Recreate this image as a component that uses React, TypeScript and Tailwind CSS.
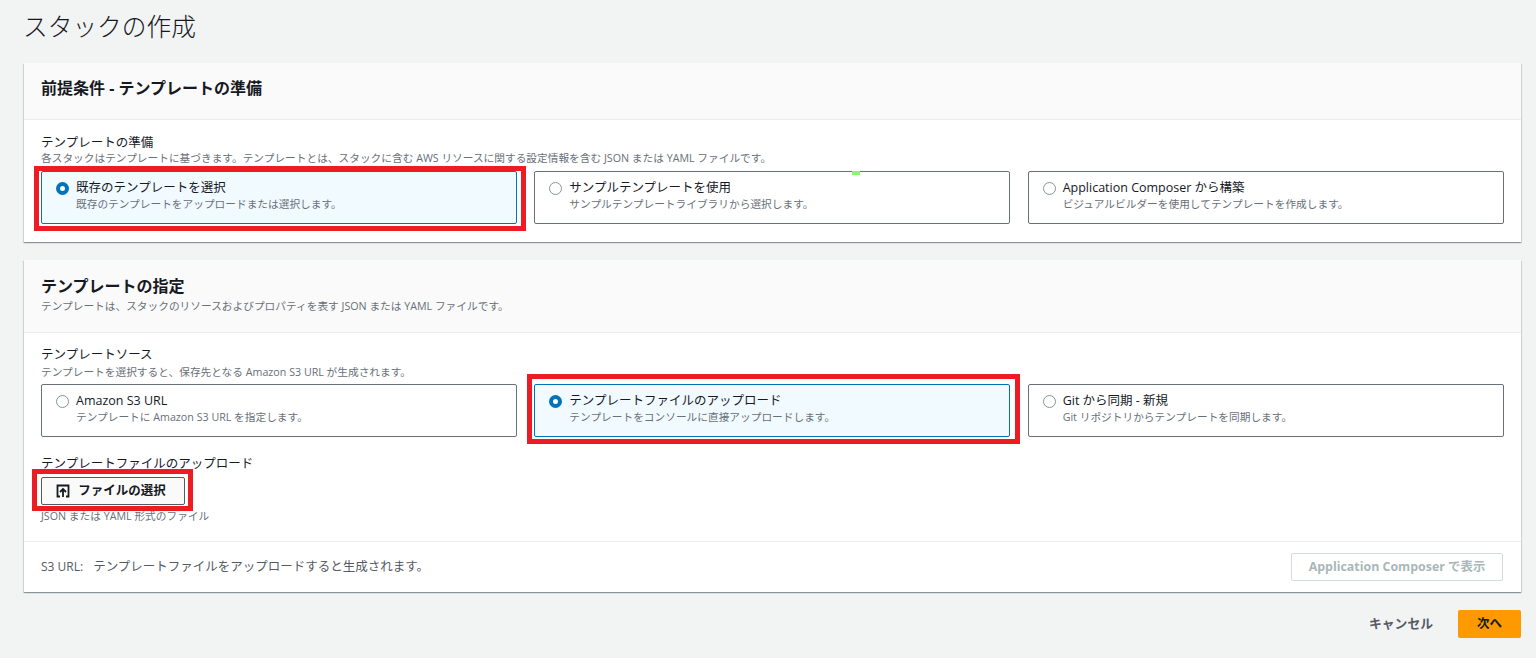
import React from "react";

const Radio = ({ on }: { on?: boolean }) =>
  on ? (
    <span className="mt-[10px] h-[13px] w-[13px] shrink-0 rounded-full border-[4px] border-[#0073bb] bg-white" />
  ) : (
    <span className="mt-[10px] h-[13px] w-[13px] shrink-0 rounded-full border-[1.5px] border-[#879596] bg-white" />
  );

const Tile = ({
  title,
  desc,
  on,
  mark,
  children,
}: {
  title: string;
  desc: string;
  on?: boolean;
  mark?: boolean;
  children?: React.ReactNode;
}) => (
  <div
    className={`relative flex h-[53px] gap-[7px] rounded-[2px] border px-[14px] ${
      on ? "border-[#0073bb] bg-[#f1faff]" : "border-[#687078] bg-white"
    }`}
  >
    <Radio on={on} />
    <div className="pt-[7px]">
      <div className="text-[12.5px] leading-[17px] text-[#16191f]">{title}</div>
      <div className="mt-px text-[10.7px] leading-[14px] text-[#687078]">{desc}</div>
    </div>
    {mark && <span className="absolute left-[317px] -top-px h-[4px] w-[8px] bg-[#8ff07a]" />}
    {children}
  </div>
);

const Red = ({ cls }: { cls: string }) => (
  <span className={`pointer-events-none absolute border-[5px] border-[#ed1c24] ${cls}`} />
);

const cardCls = "bg-white shadow-[0_1px_1px_0_rgba(0,28,36,0.3),1px_1px_1px_0_rgba(0,28,36,0.1),-1px_1px_1px_0_rgba(0,28,36,0.1)]";

export default function App() {
  return (
    <div className="h-[658px] w-[1536px] overflow-hidden bg-[#f2f3f3] pl-[24px] pr-[15px] font-['Open_Sans','Noto_Sans_CJK_JP',sans-serif]">
      <div className="-ml-px h-[63px] pt-[9px] text-[24.7px] font-light leading-[36px] text-[#16191f]">スタックの作成</div>

      <section className={`h-[179px] ${cardCls}`}>
        <div className="flex h-[57px] items-center border-b border-[#eaeded] bg-[#fafafa] pb-[6px] pl-[17px] pr-[18px] text-[16px] font-bold text-[#16191f]">
          前提条件 - テンプレートの準備
        </div>
        <div className="pl-[17px] pr-[17.5px] pt-[15px]">
          <div className="text-[12.5px] leading-[16px] text-[#16191f]">テンプレートの準備</div>
          <div className="mt-px text-[10.7px] leading-[13px] text-[#687078]">
            各スタックはテンプレートに基づきます。テンプレートとは、スタックに含む AWS リソースに関する設定情報を含む JSON または YAML ファイルです。
          </div>
          <div className="mt-[6px] grid grid-cols-3 gap-[17.5px]">
            <Tile on title="既存のテンプレートを選択" desc="既存のテンプレートをアップロードまたは選択します。">
              <Red cls="-left-[8px] -right-[10px] -top-[6px] -bottom-[8px]" />
            </Tile>
            <Tile mark title="サンプルテンプレートを使用" desc="サンプルテンプレートライブラリから選択します。" />
            <Tile title="Application Composer から構築" desc="ビジュアルビルダーを使用してテンプレートを作成します。" />
          </div>
        </div>
      </section>

      <section className={`mt-[18px] h-[332px] ${cardCls}`}>
        <div className="h-[73px] border-b border-[#eaeded] bg-[#fafafa] pl-[17px] pr-[18px] pt-[16px]">
          <div className="text-[16px] font-bold leading-[21px] text-[#16191f]">テンプレートの指定</div>
          <div className="mt-[2px] text-[10.7px] leading-[15px] text-[#687078]">
            テンプレートは、スタックのリソースおよびプロパティを表す JSON または YAML ファイルです。
          </div>
        </div>
        <div className="h-[209px] border-b border-[#eaeded] pl-[17px] pr-[17.5px] pt-[14px]">
          <div className="text-[12.5px] leading-[16px] text-[#16191f]">テンプレートソース</div>
          <div className="mt-[3px] text-[10.7px] leading-[13px] text-[#687078]">
            テンプレートを選択すると、保存先となる Amazon S3 URL が生成されます。
          </div>
          <div className="mt-[5px] grid grid-cols-3 gap-[17.5px]">
            <Tile title="Amazon S3 URL" desc="テンプレートに Amazon S3 URL を指定します。" />
            <Tile on title="テンプレートファイルのアップロード" desc="テンプレートをコンソールに直接アップロードします。">
              <Red cls="-left-[8px] -right-[11px] -top-[11px] -bottom-[8px]" />
            </Tile>
            <Tile title="Git から同期 - 新規" desc="Git リポジトリからテンプレートを同期します。" />
          </div>
          <div className="mt-[19px] text-[12.5px] leading-[16px] text-[#16191f]">テンプレートファイルのアップロード</div>
          <button className="relative mt-[5px] flex h-[28px] w-[144px] items-center justify-center gap-[8px] rounded-[2px] border border-[#545b64] bg-[#fafafa] pr-[4px] text-[12.5px] font-bold text-[#16191f]">
            <svg width="14" height="14" viewBox="0 0 14 14" fill="none" stroke="#16191f" strokeWidth="1.8">
              <path d="M4 12.5H1.5V1.5H12.5V12.5H10" />
              <path d="M7 13V5.5M4 8l3-3 3 3" />
            </svg>
            ファイルの選択
            <Red cls="-left-[10px] -right-[9px] -top-[9px] -bottom-[7px]" />
          </button>
          <div className="mt-[4px] text-[10.7px] leading-[14px] text-[#687078]">JSON または YAML 形式のファイル</div>
        </div>
        <div className="flex h-[50px] items-center justify-between pl-[17px] pr-[18px]">
          <div className="flex gap-[10px] text-[12.5px] text-[#545b64]">
            <span className="text-[12px]">S3 URL:</span>
            <span>テンプレートファイルをアップロードすると生成されます。</span>
          </div>
          <button className="h-[28px] w-[212px] rounded-[2px] border border-[#d5dbdb] bg-white text-[12.4px] font-bold text-[#aab7b8]">
            Application Composer で表示
          </button>
        </div>
      </section>

      <div className="mt-[18px] flex items-center justify-end">
        <span className="mr-[25px] text-[12.8px] font-semibold text-[#545b64]">キャンセル</span>
        <button className="h-[28px] w-[63px] rounded-[2px] bg-[#ff9900] text-[12.5px] font-bold text-[#16191f]">次へ</button>
      </div>
    </div>
  );
}
